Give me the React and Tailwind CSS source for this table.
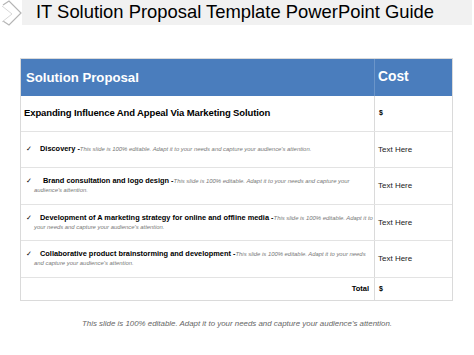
import React from 'react';

const items = [
  {
    title: 'Discovery',
    line1: "This slide is 100% editable. Adapt it to your needs and capture your audience's attention.",
    indent: 'indent-[6px]',
    h: 'h-[36px]',
  },
  {
    title: 'Brand consultation and logo design',
    line1: 'This slide is 100% editable. Adapt it to your needs and capture your',
    line2: "audience's attention.",
    indent: 'indent-[9px]',
    h: 'h-[37px]',
  },
  {
    title: 'Development of A marketing strategy for online and offline media',
    line1: 'This slide is 100% editable. Adapt it to',
    line2: "your needs and capture your audience's attention.",
    indent: 'indent-[6px]',
    h: 'h-[36px]',
  },
  {
    title: 'Collaborative product brainstorming and development',
    line1: 'This slide is 100% editable. Adapt it to your needs',
    line2: "and capture your audience's attention.",
    indent: 'indent-[6px]',
    h: 'h-[37px]',
  },
];

const Diamond = () => (
  <svg width="22" height="28" viewBox="0 0 22 28" className="shrink-0">
    <path d="M3 5 L9 1 L21 13 L9 25 L3 21" fill="none" stroke="#b5b5b5" strokeWidth="1.2" />
    <path d="M2 6 L12 14 L2 22" fill="none" stroke="#d8d8d8" strokeWidth="1" />
  </svg>
);

export default function App() {
  return (
    <div className="w-[474px] h-[355px] bg-white overflow-hidden font-['Liberation_Sans',Arial,sans-serif] text-black">
      {/* title */}
      <div className="flex items-start h-[27px]">
        <Diamond />
        <div className="flex-1 mr-[2px] h-[25px] bg-[#f1f1f1] pl-[14px] flex items-center">
          <h1 className="text-[18.4px] leading-none">IT Solution Proposal Template PowerPoint Guide</h1>
        </div>
      </div>

      {/* table */}
      <div className="ml-[20px] mt-[31px] w-[433px] border border-[#dadada]">
        <div className="grid grid-cols-[354px_1fr] h-[37px] bg-[#4a7dbd] text-white font-bold text-[13.2px]">
          <div className="flex items-center pl-[5px] border-r border-[#6b95c9]">Solution Proposal</div>
          <div className="flex items-center pl-[3px] text-[13.8px]">Cost</div>
        </div>

        <div className="grid grid-cols-[354px_1fr] h-[36px] border-b border-[#e3e3e3]">
          <div className="flex items-center pl-[3px] font-bold text-[9.5px] tracking-[-0.12px] border-r border-[#dadada]">
            Expanding Influence And Appeal Via Marketing Solution
          </div>
          <div className="flex items-center pl-[4px] font-bold text-[7px]">$</div>
        </div>

        {items.map((it) => (
          <div key={it.title} className={`grid grid-cols-[354px_1fr] ${it.h} border-b border-[#e3e3e3]`}>
            <div className="flex items-center border-r border-[#dadada]">
              <div className="relative pl-[13px]">
                <span className="absolute left-[5px] top-0 text-[7px] leading-[8.8px]">✓</span>
                <p className={`${it.indent} text-[5.9px] leading-[8.8px] whitespace-nowrap`}>
                  <span className="font-bold text-[7.4px]">{it.title} -</span>
                  <span className="italic text-[#777]">{it.line1}</span>
                  {it.line2 && (
                    <>
                      <br />
                      <span className="italic text-[#777]">{it.line2}</span>
                    </>
                  )}
                </p>
              </div>
            </div>
            <div className="flex items-center pl-[3px] text-[8px] text-[#222]">Text Here</div>
          </div>
        ))}

        <div className="grid grid-cols-[354px_1fr] h-[22px]">
          <div className="flex items-center justify-end pr-[5px] font-bold text-[7.5px] border-r border-[#dadada]">Total</div>
          <div className="flex items-center pl-[4px] font-bold text-[7px]">$</div>
        </div>
      </div>

      <p className="mt-[17px] text-center italic text-[7.9px] text-[#666]">
        This slide is 100% editable. Adapt it to your needs and capture your audience's attention.
      </p>
    </div>
  );
}
